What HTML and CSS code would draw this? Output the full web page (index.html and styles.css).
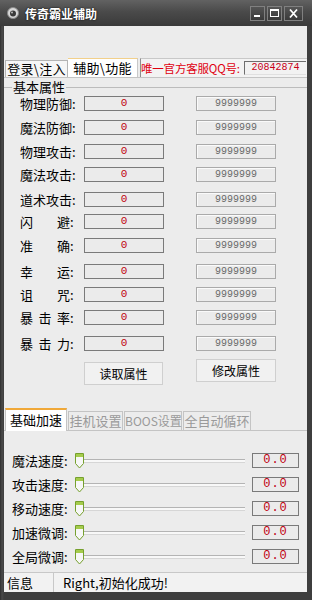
FILE: index.html
```html
<!DOCTYPE html>
<html lang="zh-CN">
<head>
    <meta charset="UTF-8">
    <meta name="viewport" content="width=device-width, initial-scale=1.0">
    <title>传奇霸业辅助</title>
    <link rel="stylesheet" href="styles.css">
</head>
<body>
    <div class="window">
        <div class="titlebar">
            <svg class="app-icon" width="12" height="12" viewBox="0 0 12 12">
                <circle cx="6" cy="6" r="5.5" fill="#d8d8d8" stroke="#8a8a8a"/>
                <circle cx="6" cy="6.5" r="3" fill="#3a3a3a"/>
                <circle cx="5" cy="5.5" r="1" fill="#bbbbbb"/>
            </svg>
            <span class="title">传奇霸业辅助</span>
            <div class="caption-btns">
                <span class="cap-btn">
                    <svg width="15" height="15" viewBox="0 0 15 15"><rect x="4" y="9" width="6" height="2" fill="#fff"/></svg>
                </span>
                <span class="cap-btn">
                    <svg width="15" height="15" viewBox="0 0 15 15"><rect x="3.5" y="3.5" width="8" height="7" fill="none" stroke="#fff"/><rect x="3" y="3" width="9" height="2" fill="#fff"/></svg>
                </span>
                <span class="cap-btn close">
                    <svg width="19" height="15" viewBox="0 0 19 15"><path d="M6 3.5 L13 11.5 M13 3.5 L6 11.5" stroke="#fff" stroke-width="1.8"/></svg>
                </span>
            </div>
        </div>

        <div class="client">
            <div class="menu-space"></div>

            <div class="tabbar">
                <span class="tab first">登录\注入</span>
                <span class="tab active">辅助\功能</span>
                <div class="qq-box">
                    <span class="qq-label">唯一官方客服QQ号:</span>
                    <span class="qq-input">20842874</span>
                </div>
            </div>

            <div class="panel">
                <div class="group-title"><span>基本属性</span></div>

                <div class="attr-row">
                    <span class="lbl">物理防御:</span>
                    <span class="val">0</span>
                    <span class="max">9999999</span>
                </div>
                <div class="attr-row g9">
                    <span class="lbl">魔法防御:</span>
                    <span class="val">0</span>
                    <span class="max">9999999</span>
                </div>
                <div class="attr-row g9">
                    <span class="lbl">物理攻击:</span>
                    <span class="val">0</span>
                    <span class="max">9999999</span>
                </div>
                <div class="attr-row g8">
                    <span class="lbl">魔法攻击:</span>
                    <span class="val">0</span>
                    <span class="max">9999999</span>
                </div>
                <div class="attr-row g10">
                    <span class="lbl">道术攻击:</span>
                    <span class="val">0</span>
                    <span class="max">9999999</span>
                </div>
                <div class="attr-row g7">
                    <span class="lbl"><span class="spread"><i>闪</i><i>避</i></span>:</span>
                    <span class="val">0</span>
                    <span class="max">9999999</span>
                </div>
                <div class="attr-row g9">
                    <span class="lbl"><span class="spread"><i>准</i><i>确</i></span>:</span>
                    <span class="val">0</span>
                    <span class="max">9999999</span>
                </div>
                <div class="attr-row g11">
                    <span class="lbl"><span class="spread"><i>幸</i><i>运</i></span>:</span>
                    <span class="val">0</span>
                    <span class="max">9999999</span>
                </div>
                <div class="attr-row g8">
                    <span class="lbl"><span class="spread"><i>诅</i><i>咒</i></span>:</span>
                    <span class="val">0</span>
                    <span class="max">9999999</span>
                </div>
                <div class="attr-row g8">
                    <span class="lbl"><span class="spread"><i>暴</i><i>击</i><i>率</i></span>:</span>
                    <span class="val">0</span>
                    <span class="max">9999999</span>
                </div>
                <div class="attr-row g11">
                    <span class="lbl"><span class="spread"><i>暴</i><i>击</i><i>力</i></span>:</span>
                    <span class="val">0</span>
                    <span class="max">9999999</span>
                </div>

                <div class="btn-row">
                    <button class="btn read">读取属性</button>
                    <button class="btn write">修改属性</button>
                </div>

                <div class="tabbar2">
                    <span class="tab2 active">基础加速</span>
                    <span class="tab2 w55">挂机设置</span>
                    <span class="tab2 w58">BOOS设置</span>
                    <span class="tab2 w68">全自动循环</span>
                </div>

                <div class="panel2">
                    <div class="slider-row">
                        <span class="s-lbl">魔法速度:</span>
                        <svg class="thumb" width="9" height="16" viewBox="0 0 9 16"><path d="M0.5 0.5 H8.5 V10.5 L4.5 15 L0.5 10.5 Z" fill="#f7f7f7" stroke="#76a02e"/><rect x="1" y="1" width="7" height="3" fill="#a5cc4c"/></svg>
                        <span class="track"></span>
                        <span class="s-val">0.0</span>
                    </div>
                    <div class="slider-row">
                        <span class="s-lbl">攻击速度:</span>
                        <svg class="thumb" width="9" height="16" viewBox="0 0 9 16"><path d="M0.5 0.5 H8.5 V10.5 L4.5 15 L0.5 10.5 Z" fill="#f7f7f7" stroke="#76a02e"/><rect x="1" y="1" width="7" height="3" fill="#a5cc4c"/></svg>
                        <span class="track"></span>
                        <span class="s-val">0.0</span>
                    </div>
                    <div class="slider-row">
                        <span class="s-lbl">移动速度:</span>
                        <svg class="thumb" width="9" height="16" viewBox="0 0 9 16"><path d="M0.5 0.5 H8.5 V10.5 L4.5 15 L0.5 10.5 Z" fill="#f7f7f7" stroke="#76a02e"/><rect x="1" y="1" width="7" height="3" fill="#a5cc4c"/></svg>
                        <span class="track"></span>
                        <span class="s-val">0.0</span>
                    </div>
                    <div class="slider-row">
                        <span class="s-lbl">加速微调:</span>
                        <svg class="thumb" width="9" height="16" viewBox="0 0 9 16"><path d="M0.5 0.5 H8.5 V10.5 L4.5 15 L0.5 10.5 Z" fill="#f7f7f7" stroke="#76a02e"/><rect x="1" y="1" width="7" height="3" fill="#a5cc4c"/></svg>
                        <span class="track"></span>
                        <span class="s-val">0.0</span>
                    </div>
                    <div class="slider-row">
                        <span class="s-lbl">全局微调:</span>
                        <svg class="thumb" width="9" height="16" viewBox="0 0 9 16"><path d="M0.5 0.5 H8.5 V10.5 L4.5 15 L0.5 10.5 Z" fill="#f7f7f7" stroke="#76a02e"/><rect x="1" y="1" width="7" height="3" fill="#a5cc4c"/></svg>
                        <span class="track"></span>
                        <span class="s-val">0.0</span>
                    </div>
                </div>
            </div>

            <div class="statusbar">
                <span class="status-cell">信息</span>
                <span class="status-text">Right,初始化成功!</span>
            </div>
        </div>
    </div>
</body>
</html>
```

FILE: styles.css
```css
body {
    margin: 0;
    padding: 0;
    background-color: #3c3c3c;
    font-family: "Noto Sans CJK SC", "Liberation Sans", sans-serif;
    font-size: 13px;
    color: #000;
}
.window {
    width: 312px;
    height: 600px;
    box-sizing: border-box;
    padding: 0 5px 8px 4px;
    display: flex;
    flex-direction: column;
    background: linear-gradient(90deg, #2e2e2e, #4a4a4a 2px, #3e3e3e 4px);
}
.titlebar {
    height: 26px;
    margin: 0 -5px 0 -4px;
    padding-left: 7px;
    display: flex;
    align-items: center;
    background: linear-gradient(#626262, #4a4a4a 45%, #3a3a3a);
    flex-shrink: 0;
}
.app-icon {
    margin-right: 6px;
}
.title {
    color: #fff;
    font-weight: bold;
    font-size: 12px;
    text-shadow: 0 0 2px #000;
}
.caption-btns {
    margin-left: auto;
    padding-right: 9px;
    display: flex;
    gap: 2px;
}
.cap-btn {
    display: flex;
    width: 15px;
    height: 15px;
    box-sizing: border-box;
    border: 1px solid #808080;
    background: linear-gradient(#555, #3a3a3a);
    align-items: center;
    justify-content: center;
}
.cap-btn svg {
    flex-shrink: 0;
}
.cap-btn.close {
    width: 19px;
}
.client {
    flex: 1;
    display: flex;
    flex-direction: column;
    background-color: #ececec;
}
.menu-space {
    height: 32px;
}
.tabbar {
    height: 19px;
    display: flex;
    align-items: flex-end;
    padding-left: 1px;
}
.tab {
    height: 17px;
    box-sizing: border-box;
    border: 1px solid #b4b4b4;
    border-bottom: none;
    background-color: #f6f6f6;
    line-height: 16px;
    text-align: center;
    letter-spacing: 0.3px;
}
.tab.first {
    width: 63px;
}
.tab.active {
    width: 70px;
    height: 19px;
    background-color: #fff;
    border-top: 1px solid #f2d08a;
    border-left: none;
    border-right: 1px solid #c8c8c8;
    line-height: 18px;
}
.qq-box {
    margin-left: 2px;
    height: 19px;
    flex: 1;
    display: flex;
    align-items: center;
    box-sizing: border-box;
    border-left: 1px solid #8e8e8e;
    border-top: 1px solid #c8c8c8;
    background-color: #f3f3f3;
}
.qq-label {
    width: 103px;
    flex-shrink: 0;
    color: #e00010;
    font-size: 11.5px;
    letter-spacing: -0.2px;
    white-space: nowrap;
    overflow: visible;
    line-height: 16px;
}
.qq-input {
    flex: 1;
    height: 14px;
    margin-right: 1px;
    box-sizing: border-box;
    border-top: 1px solid #6e6e6e;
    border-left: 1px solid #6e6e6e;
    border-bottom: 1px solid #e0e0e0;
    background-color: #f2f2f2;
    color: #c80018;
    font-family: "Liberation Mono", monospace;
    font-size: 10px;
    line-height: 12px;
    text-align: center;
}
.panel {
    flex: 1;
    display: flex;
    flex-direction: column;
    border-top: 1px solid #c4c4c4;
}
.group-title {
    margin-top: 2px;
    height: 14px;
    display: flex;
    align-items: center;
}
.group-title::before,
.group-title::after {
    content: "";
    height: 1px;
    background-color: #bcbcbc;
}
.group-title::before {
    width: 8px;
}
.group-title::after {
    flex: 1;
}
.group-title span {
    padding: 0 1px;
    line-height: 14px;
}
.attr-row {
    margin-top: 2px;
    height: 15px;
    padding-left: 16px;
    display: flex;
    align-items: center;
}
.g7 { margin-top: 7px; }
.g8 { margin-top: 8px; }
.g9 { margin-top: 9px; }
.g10 { margin-top: 10px; }
.g11 { margin-top: 11px; }
.lbl {
    width: 64px;
    display: flex;
    line-height: 15px;
}
.spread {
    width: 50px;
    display: flex;
    justify-content: space-between;
}
.spread i {
    font-style: normal;
}
.val,
.max {
    width: 80px;
    height: 15px;
    box-sizing: border-box;
    text-align: center;
    font-family: "Liberation Mono", monospace;
    font-size: 11px;
    line-height: 13px;
}
.val {
    border: 1px solid #7a7a7a;
    background-color: #ebebeb;
    color: #c00010;
}
.max {
    margin-left: 32px;
    border: 1px solid #aaa;
    box-shadow: inset 1px 1px 0 #fafafa;
    background-color: #ebebeb;
    color: #6a6a6a;
    font-size: 10px;
}
.btn-row {
    margin-top: 8px;
    padding-left: 80px;
    display: flex;
    align-items: flex-start;
}
.btn {
    width: 79px;
    height: 23px;
    border: 1px solid #cfcfcf;
    background-color: #f1f1f1;
    font-family: "Noto Sans CJK SC", sans-serif;
    font-size: 12px;
    color: #000;
    padding: 0;
}
.btn.read {
    margin-top: 3px;
}
.btn.write {
    margin-left: 33px;
    width: 80px;
}
.tabbar2 {
    margin-top: 23px;
    height: 22px;
    padding-left: 1px;
    display: flex;
    align-items: flex-end;
}
.tab2 {
    height: 19px;
    margin-left: 1px;
    box-sizing: border-box;
    border: 1px solid #c4c4c4;
    border-bottom: none;
    background-color: #ececec;
    color: #9a9a9a;
    text-align: center;
    line-height: 18px;
    white-space: nowrap;
}
.tab2.active {
    margin-left: 0;
    width: 62px;
    height: 23px;
    margin-bottom: -1px;
    background-color: #fff;
    border-top: 2px solid #f0a838;
    color: #000;
    line-height: 20px;
    position: relative;
}
.w55 { width: 55px; }
.w58 { width: 58px; font-size: 12px; }
.w68 { width: 68px; }
.panel2 {
    flex: 1;
    border-top: 1px solid #c4c4c4;
    padding-top: 22px;
    display: flex;
    flex-direction: column;
    gap: 9px;
}
.slider-row {
    height: 15px;
    padding-left: 8px;
    display: flex;
    align-items: center;
}
.s-lbl {
    width: 63px;
    line-height: 15px;
}
.thumb {
    flex-shrink: 0;
    margin-top: 1px;
}
.track {
    width: 161px;
    height: 2px;
    border-top: 1px solid #b4b4b4;
    border-bottom: 1px solid #d6d6d6;
    background-color: #f8f8f8;
}
.s-val {
    margin-left: 7px;
    width: 47px;
    height: 15px;
    box-sizing: border-box;
    border: 1px solid #7a7a7a;
    background-color: #ebebeb;
    color: #c00010;
    font-family: "Liberation Mono", monospace;
    font-size: 12px;
    letter-spacing: 1px;
    line-height: 13px;
    text-align: center;
}
.statusbar {
    height: 20px;
    box-sizing: border-box;
    border-top: 1px solid #c8c8c8;
    background-color: #f2f2f2;
    display: flex;
    align-items: center;
    padding-left: 3px;
}
.status-cell {
    width: 46px;
    height: 19px;
    border-right: 1px solid #c8c8c8;
    line-height: 19px;
}
.status-text {
    padding-left: 9px;
    line-height: 19px;
}
```
